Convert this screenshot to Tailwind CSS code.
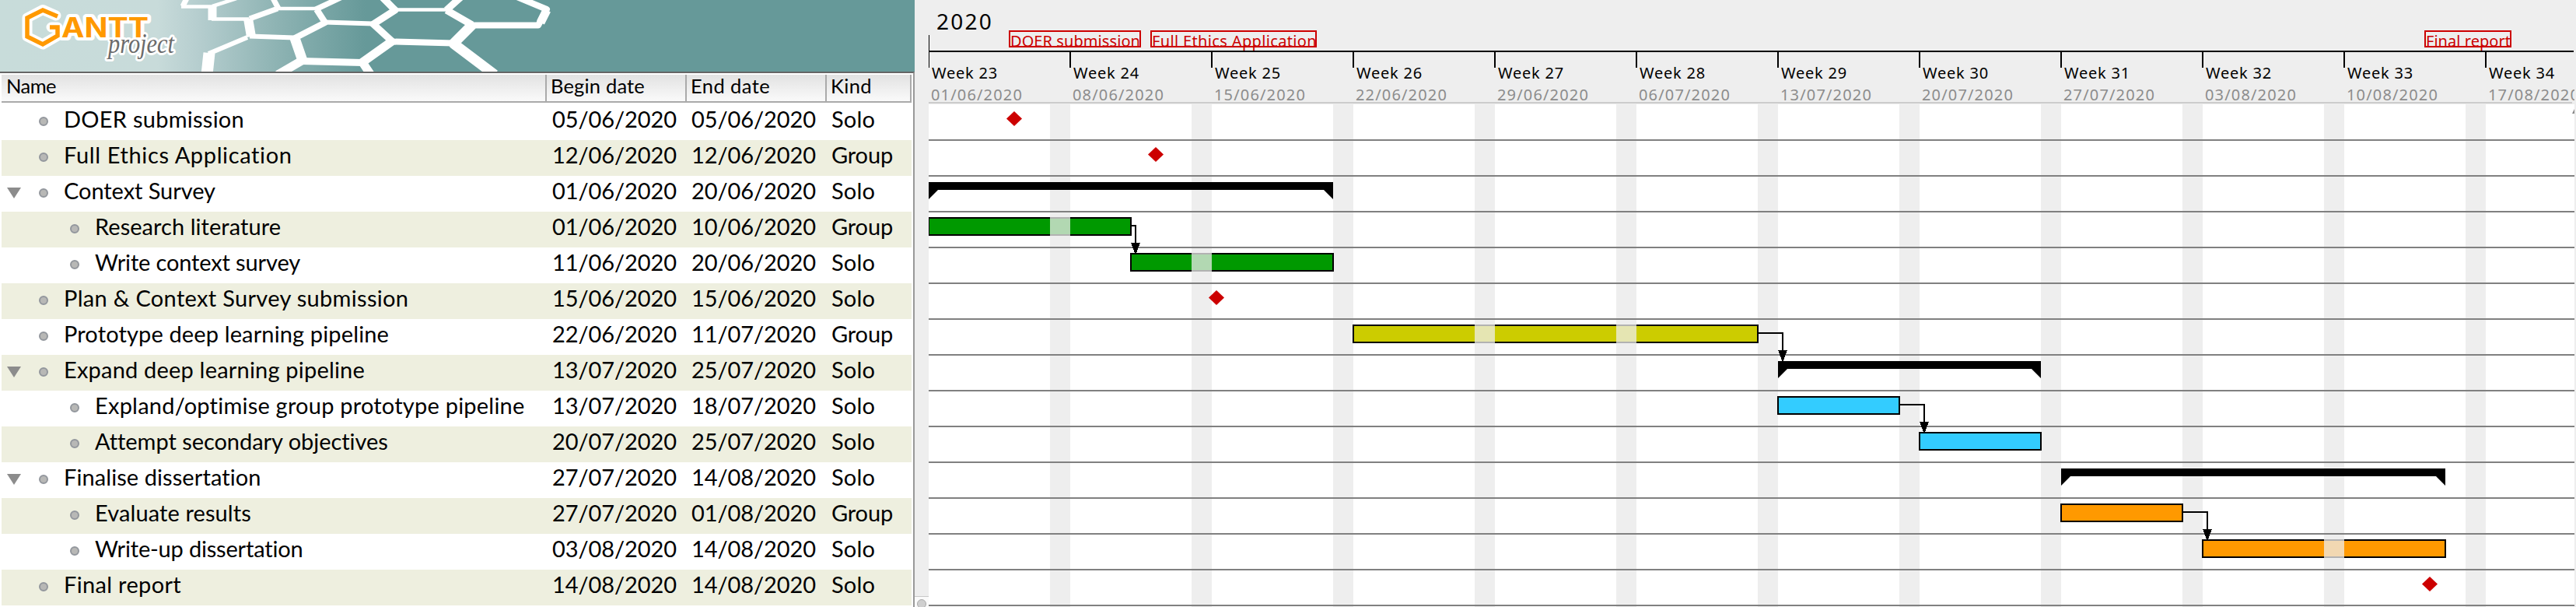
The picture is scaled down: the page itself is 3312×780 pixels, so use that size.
<!DOCTYPE html>
<html lang="en">
<head>
<meta charset="utf-8">
<title>GanttProject</title>
<script src="https://cdn.jsdelivr.net/npm/@tailwindcss/browser@4"></script>
</head>
<body class="w-[3312px] h-[780px] overflow-hidden bg-[#eeeeee] text-black">
<main class="flex w-[3312px] h-[780px] overflow-hidden">

  <!-- Task table -->
  <section class="flex w-[1176px] shrink-0 flex-col bg-white font-['Lato',sans-serif]">
    <svg class="block h-[92px] w-[1176px] shrink-0" viewBox="0 0 1176 92">
      <defs>
        <linearGradient id="teal" gradientUnits="userSpaceOnUse" x1="0" y1="0" x2="470" y2="0">
          <stop offset="0" stop-color="#c8dcda"/><stop offset="0.43" stop-color="#c8dbda"/><stop offset="0.54" stop-color="#b6cecf"/>
          <stop offset="0.75" stop-color="#8fb4b4"/><stop offset="1" stop-color="#669999"/>
        </linearGradient>
      </defs>
      <rect width="1176" height="92" fill="url(#teal)"/>
      <g fill="none" stroke="#fff" stroke-linejoin="round">
        <path stroke-width="4.5" d="M233 8.500H273M273 8L304 -2M357 11H406M272 24.500H320M507 12.500H574"/>
        <path stroke-width="7" d="M241 -4L235 8M321 24L357 11M350 -4L358 11M406 12L440 -4"/>
        <path stroke-width="5" d="M321 24L357 11"/>
        <path stroke-width="11" d="M273 7V26"/>
        <path stroke-width="6" d="M417 28.500L480 30.500M321 46.500L379 48.500M318 48L268 69"/>
        <path stroke-width="12" d="M319 24L323 47"/>
        <path stroke-width="15" d="M269 68L266 96"/>
        <path stroke-width="8" d="M407 12L418 29L379 49M504 53.500L583 55.500M607 32.500H692L703 12L655 -8"/>
        <path stroke-width="9" d="M489 -6L508 13L480 31L504 53M574 13L594 -5M574 13L607 32M388 78.500L466 80.500"/>
        <path stroke-width="11" d="M504 53L466 80L478 98M388 78L357 96M695 29L703 13"/>
        <path stroke-width="13" d="M379 49L389 78M607 32L583 56L636 96"/>
      </g>
      <!-- logo mark and wordmark -->
      <g fill="none" stroke-linejoin="miter">
        <path stroke="#fff" stroke-width="13" stroke-linejoin="round" stroke-linecap="round" d="M72 20L55 12.500L35 23V47L55 57L74 46V35H66"/>
        <text x="79" y="48" textLength="112" lengthAdjust="spacingAndGlyphs" font-family="Inter, sans-serif" font-weight="700" font-size="35" fill="#ff9900" stroke="#fff" stroke-width="8" stroke-linejoin="round" paint-order="stroke">ANTT</text>
        <text x="139" y="68" textLength="85" lengthAdjust="spacingAndGlyphs" font-family="Liberation Serif, serif" font-style="italic" font-size="35" fill="#6b6b6b" stroke="#fff" stroke-width="6" stroke-linejoin="round" paint-order="stroke">project</text>
        <path stroke="#ff9900" stroke-width="5.500" d="M74 21L55 13L35 23V47L55 57L74 46V35H64"/>
      </g>
    </svg>
    <div class="flex-1 border-t-2 border-r-2 border-t-[#666666] border-r-[#999999] pt-[2px] pl-[2px] pr-[2px]">
      <div class="flex h-[36px] border-b-2 border-[#aaaaaa] bg-linear-to-b from-[#e2e2e2] to-[#fafafa] text-[25.500px] leading-[28px]" data-font="25.5px Lato">
        <div class="w-[701px] border-r-2 border-[#aaaaaa] pl-[6px]"><span class="inline-block whitespace-pre" data-fit="64">Name</span></div>
        <div class="w-[180px] border-r-2 border-[#aaaaaa] pl-[5px]"><span class="inline-block whitespace-pre" data-fit="121">Begin date</span></div>
        <div class="w-[180px] border-r-2 border-[#aaaaaa] pl-[5px]"><span class="inline-block whitespace-pre" data-fit="102">End date</span></div>
        <div class="w-[109px] border-r-2 border-[#aaaaaa] pl-[5px]"><span class="inline-block whitespace-pre" data-fit="53">Kind</span></div>
      </div>
      <div id="tasks" class="pt-[2px]" data-font="29px Lato"></div>
    </div>
  </section>

  <!-- Splitter gutter -->
  <div class="flex w-[18px] shrink-0 flex-col justify-end bg-[#eeeeee]">
    <div class="flex h-[14px] justify-center overflow-hidden border-t border-[#c8c8c8] bg-[#fafafa] pt-[3px]">
      <div class="size-[12px] shrink-0 rounded-full border border-[#aaaaaa] bg-[#cfcfcf]"></div>
    </div>
  </div>

  <!-- Timeline -->
  <section class="relative flex w-[2116px] shrink-0 flex-col overflow-hidden bg-[#eeeeee] font-['Noto_Sans',sans-serif]" data-font="20px 'Noto Sans'">
    <div class="h-[65px] pt-[14px] pl-[10px] text-[28px] leading-[26px]" data-font="28px 'Noto Sans'"><span class="inline-block whitespace-pre" data-fit="73">2020</span></div>
    <div class="h-[2px] w-[2115px] bg-black"></div>
    <div id="weeks" class="flex h-[64px]"></div>
    <div class="h-[2px] w-[2113px] shrink-0 bg-[#cccccc]"></div>
    <div class="h-px shrink-0"></div>
    <div class="absolute left-0 top-[45px] h-[42px] w-px bg-black"></div>
    <div id="labels"></div>
    <div class="relative h-[646px] shrink-0 bg-white">
      <div id="weekends" class="absolute inset-0 flex"></div>
      <div id="chart" class="relative pt-px"></div>
      <svg id="links" class="absolute inset-0 h-[646px] w-[2116px]" viewBox="0 0 2116 646" shape-rendering="crispEdges"></svg>
      <svg class="absolute right-0 top-[6px] h-[6px] w-[3px]" viewBox="0 0 3 6"><path d="M3 0V6H0Z" fill="#888"/></svg>
    </div>
  </section>
</main>

<script>
const DAY = 26;
// name, level, expandable, begin, end, kind, text width, shape, start day, length in days, colour
const tasks = [
  ['DOER submission',0,0,'05/06/2020','05/06/2020','Solo',232,'m',4],
  ['Full Ethics Application',0,0,'12/06/2020','12/06/2020','Group',295,'m',11],
  ['Context Survey',0,1,'01/06/2020','20/06/2020','Solo',195,'s',0,20],
  ['Research literature',1,0,'01/06/2020','10/06/2020','Group',239,'b',0,10,'bg-[#009900]'],
  ['Write context survey',1,0,'11/06/2020','20/06/2020','Solo',264,'b',10,10,'bg-[#009900]'],
  ['Plan & Context Survey submission',0,0,'15/06/2020','15/06/2020','Solo',444,'m',14],
  ['Prototype deep learning pipeline',0,0,'22/06/2020','11/07/2020','Group',418,'b',21,20,'bg-[#cccc00]'],
  ['Expand deep learning pipeline',0,1,'13/07/2020','25/07/2020','Solo',387,'s',42,13],
  ['Expland/optimise group prototype pipeline',1,0,'13/07/2020','18/07/2020','Solo',553,'b',42,6,'bg-[#33ccff]'],
  ['Attempt secondary objectives',1,0,'20/07/2020','25/07/2020','Solo',377,'b',49,6,'bg-[#33ccff]'],
  ['Finalise dissertation',0,1,'27/07/2020','14/08/2020','Solo',254,'s',56,19],
  ['Evaluate results',1,0,'27/07/2020','01/08/2020','Group',201,'b',56,6,'bg-[#ff9900]'],
  ['Write-up dissertation',1,0,'03/08/2020','14/08/2020','Solo',268,'b',63,12,'bg-[#ff9900]'],
  ['Final report',0,0,'14/08/2020','14/08/2020','Solo',151,'m',74],
];
const text = (s, w) => `<span class="inline-block whitespace-pre" data-fit="${w}">${s.replace('&', '&amp;')}</span>`;

document.getElementById('tasks').innerHTML = tasks.map(([name, level, open, b, e, kind, w], i) => `
  <div class="flex h-[46px] text-[29px] leading-[38px] ${i % 2 ? 'bg-[#eeefdf]' : 'bg-white'}">
    <div class="flex w-[700px] shrink-0 ${level ? 'pl-[47px]' : 'pl-[7px]'}">
      <svg class="mt-[15px] h-[14px] w-[18px] shrink-0" viewBox="0 0 18 14">${open ? '<path d="M0 0H18L9 14Z" fill="#8c8c8c"/>' : ''}</svg>
      <div class="ml-[23px] mt-[16px] size-[12px] shrink-0 rounded-full border-2 border-[#93979d] bg-[#b8b8b6]"></div>
      <div class="ml-[20px]">${text(name, w)}</div>
    </div>
    <div class="w-[180px] shrink-0 pl-[8px]">${text(b, 160)}</div>
    <div class="w-[180px] shrink-0 pl-[7px]">${text(e, 160)}</div>
    <div class="pl-[7px]">${text(kind, kind === 'Solo' ? 56 : 79)}</div>
  </div>`).join('');

const dates = ['01/06/2020','08/06/2020','15/06/2020','22/06/2020','29/06/2020','06/07/2020','13/07/2020','20/07/2020','27/07/2020','03/08/2020','10/08/2020','17/08/2020'];
document.getElementById('weeks').innerHTML = dates.map((d, i) => `
  <div class="w-[182px] shrink-0 text-[20px]">
    <div class="h-[20px] border-black ${i ? '-ml-px border-l-2' : ''}"></div>
    <div class="h-[14px] pl-[4px] leading-[14px]">${text('Week ' + (23 + i), 85)}</div>
    <div class="mt-[12px] h-[18px] pl-[3px] leading-[18px] text-[#8c8c8c]">${text(d, 118)}</div>
  </div>`).join('');
document.getElementById('weekends').innerHTML = dates.slice(0, 11).map(() =>
  '<div class="h-full w-[182px] shrink-0 border-r-[26px] border-[#eeeeee]"></div>').join('');

document.getElementById('labels').innerHTML = [['DOER submission',103,170,167],['Full Ethics Application',285,214,212],['Final report',1923,112,109]].map(([s, x, w, f]) =>
  `<div class="absolute top-[39px] h-[22px] border-2 border-[#cc0000] text-[20px] leading-[23px] text-[#cc0000]" style="left:${x}px;width:${w}px">${text(s, f)}</div>`).join('');

document.getElementById('chart').innerHTML = tasks.map(t => {
  const [shape, start, len, colour] = t.slice(7), x = start * DAY, w = len * DAY;
  let s = '';
  if (shape === 'm') s = `<svg class="absolute top-[8px] h-[19px] w-[20px]" style="left:${x - 4}px" viewBox="0 0 20 19"><path d="M10 0L20 9.500L10 19L0 9.500Z" fill="#cc0000"/></svg>`;
  if (shape === 's') s = `<svg class="absolute top-[7px] h-[22px]" style="left:${x}px;width:${w}px" viewBox="0 0 ${w} 22"><path d="M0 0H${w}V22L${w - 12} 10H12L0 22Z"/></svg>`;
  if (shape === 'b') {
    s = `<div class="absolute top-[6px] h-[24px] border-2 border-black ${colour}" style="left:${x - 1}px;width:${w + 2}px"></div>`;
    for (let d = 6; d + 1 < start + len; d += 7) if (d > start)
      s += `<div class="absolute top-[6px] h-[24px] w-[26px] bg-[#eeeeee]/75" style="left:${d * DAY}px"></div>`;
  }
  return `<div class="relative h-[46px] border-b-2 border-[#808080]">${s}</div>`;
}).join('');

// finish-to-start links: row index, end day of predecessor, start day of successor
document.getElementById('links').innerHTML = [[3,10,10],[6,41,42],[8,48,49],[11,62,63]].map(([r, a, b]) => {
  const y = r * 46 + 1, x = b * DAY + 6;
  return `<path d="M${a * DAY + 1} ${y + 17}H${x}V${y + 53}" fill="none" stroke="#000" stroke-width="2"/><path d="M${x - 6} ${y + 39}H${x + 6}L${x + 1} ${y + 52}H${x - 1}Z"/>`;
}).join('');

const ctx = document.createElement('canvas').getContext('2d');
document.querySelectorAll('[data-fit]').forEach(el => {
  ctx.font = el.closest('[data-font]').dataset.font;
  const natural = ctx.measureText(el.textContent).width;
  el.style.letterSpacing = ((el.dataset.fit - natural) / el.textContent.length).toFixed(3) + 'px';
});
</script>
</body>
</html>
